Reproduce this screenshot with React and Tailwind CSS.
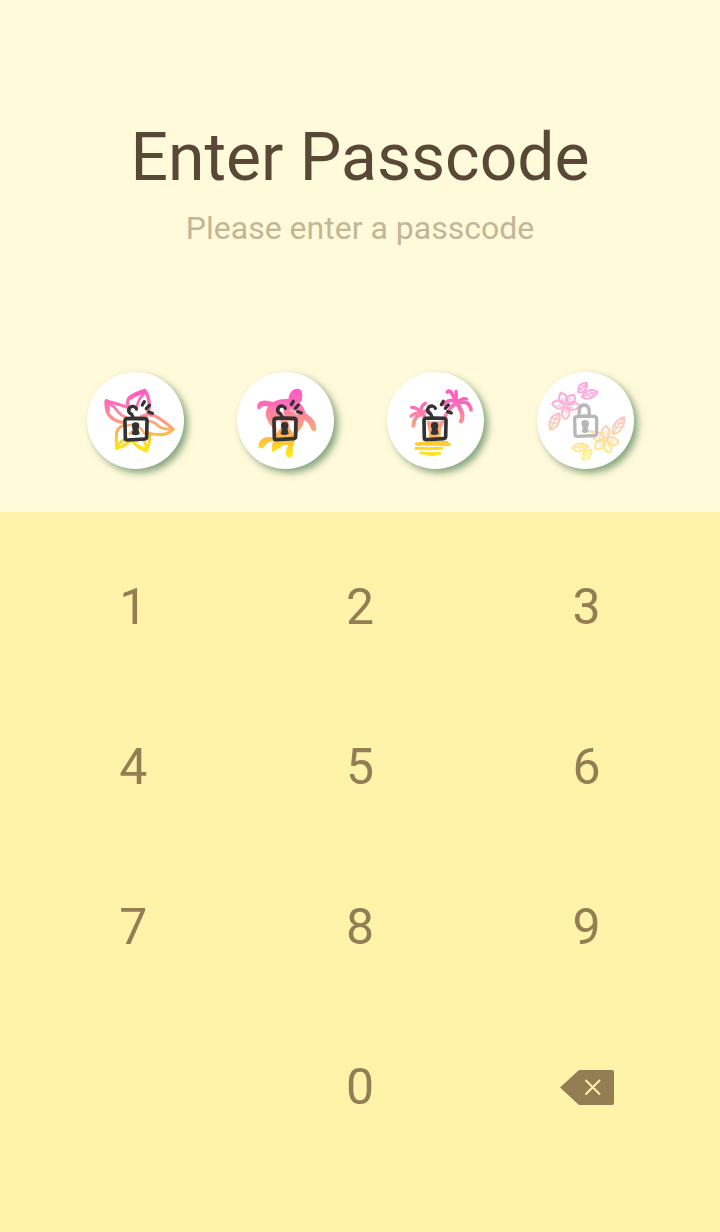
import React, { useState } from "react";

const KEYS = ["1", "2", "3", "4", "5", "6", "7", "8", "9"];

const Sunset = ({ id, y1, y2 }) => (
  <defs>
    <linearGradient id={id} gradientUnits="userSpaceOnUse" x1="0" y1={y1} x2="0" y2={y2}>
      <stop offset="0" stopColor="#ff5cc4" />
      <stop offset="0.22" stopColor="#ff6cb8" />
      <stop offset="0.5" stopColor="#fb9a84" />
      <stop offset="0.72" stopColor="#fdb94a" />
      <stop offset="0.9" stopColor="#ffdd18" />
      <stop offset="1" stopColor="#ffe61e" />
    </linearGradient>
  </defs>
);

// Open padlock with the three "click" strokes
const OpenLock = () => (
  <g stroke="#333333" fill="none" strokeLinecap="round" strokeLinejoin="round">
    <path d="M133 161 L160 160 L190 161 Q195 162 195 168 L194 215 Q194 222 188 222 L136 225 Q130 225 130 219 L129 168 Q129 162 133 161 Z" strokeWidth="11" />
    <path d="M153 157 L149 148 Q138 143 140 133 Q144 123 154 124 Q161 126 163 131" strokeWidth="10" />
    <path d="M152 180 Q152 174 161 174 Q170 174 170 181 Q170 189 167 192 L171 206 Q161 211 151 207 L155 193 Q151 188 152 180 Z" fill="#333333" strokeWidth="4" />
    <path d="M181 120 L187 110" strokeWidth="10" />
    <path d="M193 131 L202 121" strokeWidth="10" />
    <path d="M200 141 L211 145" strokeWidth="10" />
  </g>
);

const StarFlower = () => (
  <svg viewBox="18 22 291 291" className="block h-full w-full" aria-hidden="true">
    <Sunset id="flower" y1="75" y2="258" />
    <g stroke="url(#flower)" fill="none" strokeWidth="10" strokeLinecap="round" strokeLinejoin="round">
      <path d="M145 136 Q134 112 145 100 Q162 86 191 77 Q202 92 205 118 Q207 136 196 152" />
      <path d="M146 100 Q160 90 184 82" strokeWidth="13" />
      <path d="M188 88 Q176 98 172 112 Q166 122 167 136" strokeWidth="8" />
      <path d="M138 127 Q104 116 76 109 Q73 130 83 150 Q96 169 128 174" />
      <path d="M77 110 L81 136" strokeWidth="13" />
      <path d="M84 117 Q100 124 109 139 Q118 152 134 157" strokeWidth="8" />
      <path d="M180 155 Q200 148 220 153 Q246 166 277 194 Q260 210 238 210 Q215 210 198 203" strokeWidth="9" />
      <path d="M268 194 Q240 194 227 179 Q214 168 198 170" strokeWidth="8" />
      <path d="M128 182 Q110 188 107 204 Q104 224 107 252 Q128 246 144 232 Q156 224 170 229" strokeWidth="9" />
      <path d="M110 246 Q118 228 131 226" strokeWidth="9" />
      <path d="M153 228 Q168 248 197 259 Q207 236 207 212 Q204 205 197 202" strokeWidth="9" />
      <path d="M193 254 Q198 240 188 229" strokeWidth="8" />
      <path d="M174 247 L195 257" strokeWidth="12" />
      <path d="M146 208 L162 190 M178 190 L190 206 M140 182 L156 180" strokeWidth="7" />
    </g>
    <g transform="translate(3 1)">
      <OpenLock />
    </g>
  </svg>
);

const Turtle = () => (
  <svg viewBox="18 22 291 291" className="block h-full w-full" aria-hidden="true">
    <Sunset id="turtle" y1="75" y2="275" />
    <g fill="url(#turtle)">
      <path d="M172 105 Q174 84 187 75 Q202 68 211 77 Q216 89 213 103 Q209 117 194 119 Q178 119 172 105 Z" />
      <path d="M127 112 Q98 103 84 112 Q74 124 81 133 Q88 136 92 127 Q101 121 111 126 Q100 143 108 164 Q114 180 127 191 L130 220 Q108 213 92 224 Q79 235 84 249 Q93 256 102 243 Q107 232 128 228 Q119 244 124 262 Q140 255 155 243 Q167 238 172 241 Q162 258 166 274 Q173 282 182 276 Q188 266 185 249 Q189 233 194 224 L197 205 Q216 190 220 166 Q233 173 240 192 Q248 205 255 197 Q257 176 245 162 Q232 150 223 145 Q220 124 204 114 Q190 102 163 103 Q141 103 127 112 Z" />
    </g>
    <g fill="#ffffff">
      <path d="M148 128 Q155 125 158 132 L157 154 L150 147 Q144 138 148 128 Z" />
      <path d="M135 169 L147 167 L153 178 L148 191 L137 206 Z" />
      <path d="M171 168 L189 170 L188 206 L177 193 Z" />
      <path d="M174 128 L186 137 L197 134 L205 150 L190 150 L178 140 Z" opacity="0.35" />
    </g>
    <OpenLock />
  </svg>
);

const PalmBeach = () => (
  <svg viewBox="18 22 291 291" className="block h-full w-full" aria-hidden="true">
    <Sunset id="palm" y1="85" y2="270" />
    <g stroke="url(#palm)" fill="none" strokeLinecap="round" strokeLinejoin="round">
      <path d="M226 114 Q218 104 204 108 Q194 111 191 120" strokeWidth="11" />
      <path d="M226 111 Q217 94 211 84 Q205 76 199 82" strokeWidth="11" />
      <path d="M227 112 Q225 99 225 80" strokeWidth="10" />
      <path d="M229 112 Q232 109 241 104 Q248 100 257 103" strokeWidth="9" />
      <path d="M230 115 Q254 108 264 120 Q269 128 270 136" strokeWidth="11" />
      <path d="M226 112 Q241 135 244 151 Q245 163 240 170" strokeWidth="13" />
      <path d="M225 117 Q211 124 206 135 Q196 146 190 160" strokeWidth="11" />
      <path d="M121 148 Q113 129 92 128" strokeWidth="10" />
      <path d="M120 146 Q105 141 90 154" strokeWidth="10" />
      <path d="M119 149 Q100 155 97 183" strokeWidth="11" />
      <path d="M119 143 Q120 121 133 116" strokeWidth="10" />
      <path d="M122 146 Q137 131 147 143" strokeWidth="10" />
      <path d="M117 148 L130 153" strokeWidth="12" />
      <path d="M142 174 Q149 194 148 215 L174 217 Q171 193 185 172" strokeWidth="9" />
      <path d="M107 238 L143 237 L204 239" strokeWidth="11" />
      <path d="M151 233 L197 232" strokeWidth="8" />
      <path d="M105 251 L144 252 L182 251" strokeWidth="9" />
      <path d="M119 264 L146 267 L176 266" strokeWidth="9" />
      <path d="M146 270 L160 270" strokeWidth="8" />
    </g>
    <path d="M142 170 L183 169 L178 216 L148 216 Z" fill="url(#palm)" opacity="0.8" />
    <OpenLock />
  </svg>
);

const Leaf = ({ transform }) => (
  <g transform={transform}>
    <path d="M-27 0 Q-14 -15 5 -13 Q19 -10 27 0 Q16 12 -3 13 Q-18 12 -27 0 Z" />
    <path d="M-23 0 Q2 -4 22 0 M-12 0 L-6 -9 M1 -2 L8 -10 M-7 0 L1 10 M7 0 L13 7" strokeWidth="4" />
  </g>
);

// One blossom, a petal for each angle
const Hibiscus = ({ transform, angles }) => (
  <g transform={transform}>
    {angles.map((angle) => (
      <g key={angle} transform={`rotate(${angle})`}>
        <path d="M-2 -5 Q-22 -20 -3 -39 Q0 -42 4 -38 Q22 -20 2 -5" />
        <path d="M-2 -13 L-4 -26 M4 -14 L6 -22" strokeWidth="3" />
      </g>
    ))}
  </g>
);

const Garden = () => (
  <svg viewBox="21 20 291 291" className="block h-full w-full" aria-hidden="true">
    <defs>
      <linearGradient id="garden" gradientUnits="userSpaceOnUse" x1="0" y1="50" x2="0" y2="285">
        <stop offset="0" stopColor="#ff9ddf" />
        <stop offset="0.3" stopColor="#ffb0d6" />
        <stop offset="0.5" stopColor="#fdc6bc" />
        <stop offset="0.7" stopColor="#fed8a0" />
        <stop offset="0.85" stopColor="#ffe789" />
        <stop offset="1" stopColor="#fff27e" />
      </linearGradient>
    </defs>
    {/* masked so that one gradient runs through all the flowers and leaves */}
    <mask id="gardenMask" maskUnits="userSpaceOnUse" x="21" y="20" width="291" height="291">
      <g stroke="#ffffff" fill="none" strokeWidth="6" strokeLinecap="round" strokeLinejoin="round">
        <Leaf transform="translate(158 67) rotate(-48) scale(0.72 0.82)" />
        <Leaf transform="translate(179 87) rotate(-18) scale(0.92)" />
        <Hibiscus transform="translate(107 121)" angles={[-20, 40, 92, 180, 280]} />
        <Leaf transform="translate(74 168) rotate(-62) scale(1.02)" />
        <Leaf transform="translate(266 181) rotate(-57) scale(1.1 0.95)" />
        <Hibiscus transform="translate(226 223)" angles={[2, 102, 162, 228, 290]} />
        <Leaf transform="translate(151 246) rotate(-5) scale(0.9)" />
        <Leaf transform="translate(171 268) rotate(-48) scale(0.74 0.82)" />
      </g>
    </mask>
    <rect x="21" y="20" width="291" height="291" fill="url(#garden)" mask="url(#gardenMask)" />
    <path d="M133 155 L200 154 L198 212 L134 212 Z" fill="#ffffff" />
    <path d="M181 198 L191 200" stroke="#fed8a0" strokeWidth="7" strokeLinecap="round" />
    <g stroke="#b7b7b7" fill="none" strokeWidth="10" strokeLinecap="round" strokeLinejoin="round">
      <path d="M140 154 L165 152 L193 153 Q200 154 200 161 L200 204 Q200 211 193 211 L142 213 Q135 213 135 206 L134 160 Q134 154 140 154 Z" />
      <path d="M147 151 L148 131 Q151 119 162 119 Q173 119 177 131 L178 150" />
      <path d="M156 172 Q157 166 165 166 Q174 166 175 173 Q176 181 171 184 L174 198 Q166 203 158 199 L160 184 Q155 180 156 172 Z" fill="#b7b7b7" strokeWidth="4" />
    </g>
  </svg>
);

const SLOTS = [StarFlower, Turtle, PalmBeach, Garden];

const App = () => {
  const [code, setCode] = useState("");

  // Add a digit, up to four
  const press = (digit) => setCode((c) => (c + digit).slice(0, SLOTS.length));

  const keyClass =
    "flex h-40 items-center justify-center text-[50px] leading-none text-[#937d53] active:bg-[#fbe98f]";

  return (
    <div className="flex min-h-screen flex-col bg-[#fff3aa] font-['Roboto',sans-serif]">
      <header className="flex flex-col items-center bg-[#fffada] pt-[118px] pb-[43px] text-center">
        <h1 className="text-[66px] leading-20 text-[#5a4837]">Enter Passcode</h1>
        <p className="mt-2.5 text-[32px] leading-10 text-[#c3b697]">Please enter a passcode</p>

        <ul className="mt-31 flex justify-center gap-[53px]">
          {SLOTS.map((Picture, i) => (
            <li
              key={i}
              className="size-[97px] rounded-full bg-white shadow-[4px_4px_7px_#5f8a63bf]"
            >
              <Picture />
            </li>
          ))}
        </ul>
      </header>

      <main className="grid grid-cols-3 px-5 pt-[15px]" data-length={code.length}>
        {KEYS.map((digit) => (
          <button key={digit} type="button" className={keyClass} onClick={() => press(digit)}>
            {digit}
          </button>
        ))}
        <button type="button" className={`${keyClass} col-start-2`} onClick={() => press("0")}>
          0
        </button>
        <button
          type="button"
          aria-label="Delete"
          className={keyClass}
          onClick={() => setCode((c) => c.slice(0, -1))}
        >
          <svg viewBox="0 0 54 35" className="h-[35px] w-[54px]" aria-hidden="true">
            <path d="M0 17.5 L18.5 0.5 Q19 0 20 0 H52 Q54 0 54 2 V33 Q54 35 52 35 H20 Q19 35 18.5 34.5 Z" fill="#937d53" />
            <path d="M25.5 10 L40 24.5 M40 10 L25.5 24.5" stroke="#fff3aa" strokeWidth="2" />
          </svg>
        </button>
      </main>
    </div>
  );
};

export default App;
